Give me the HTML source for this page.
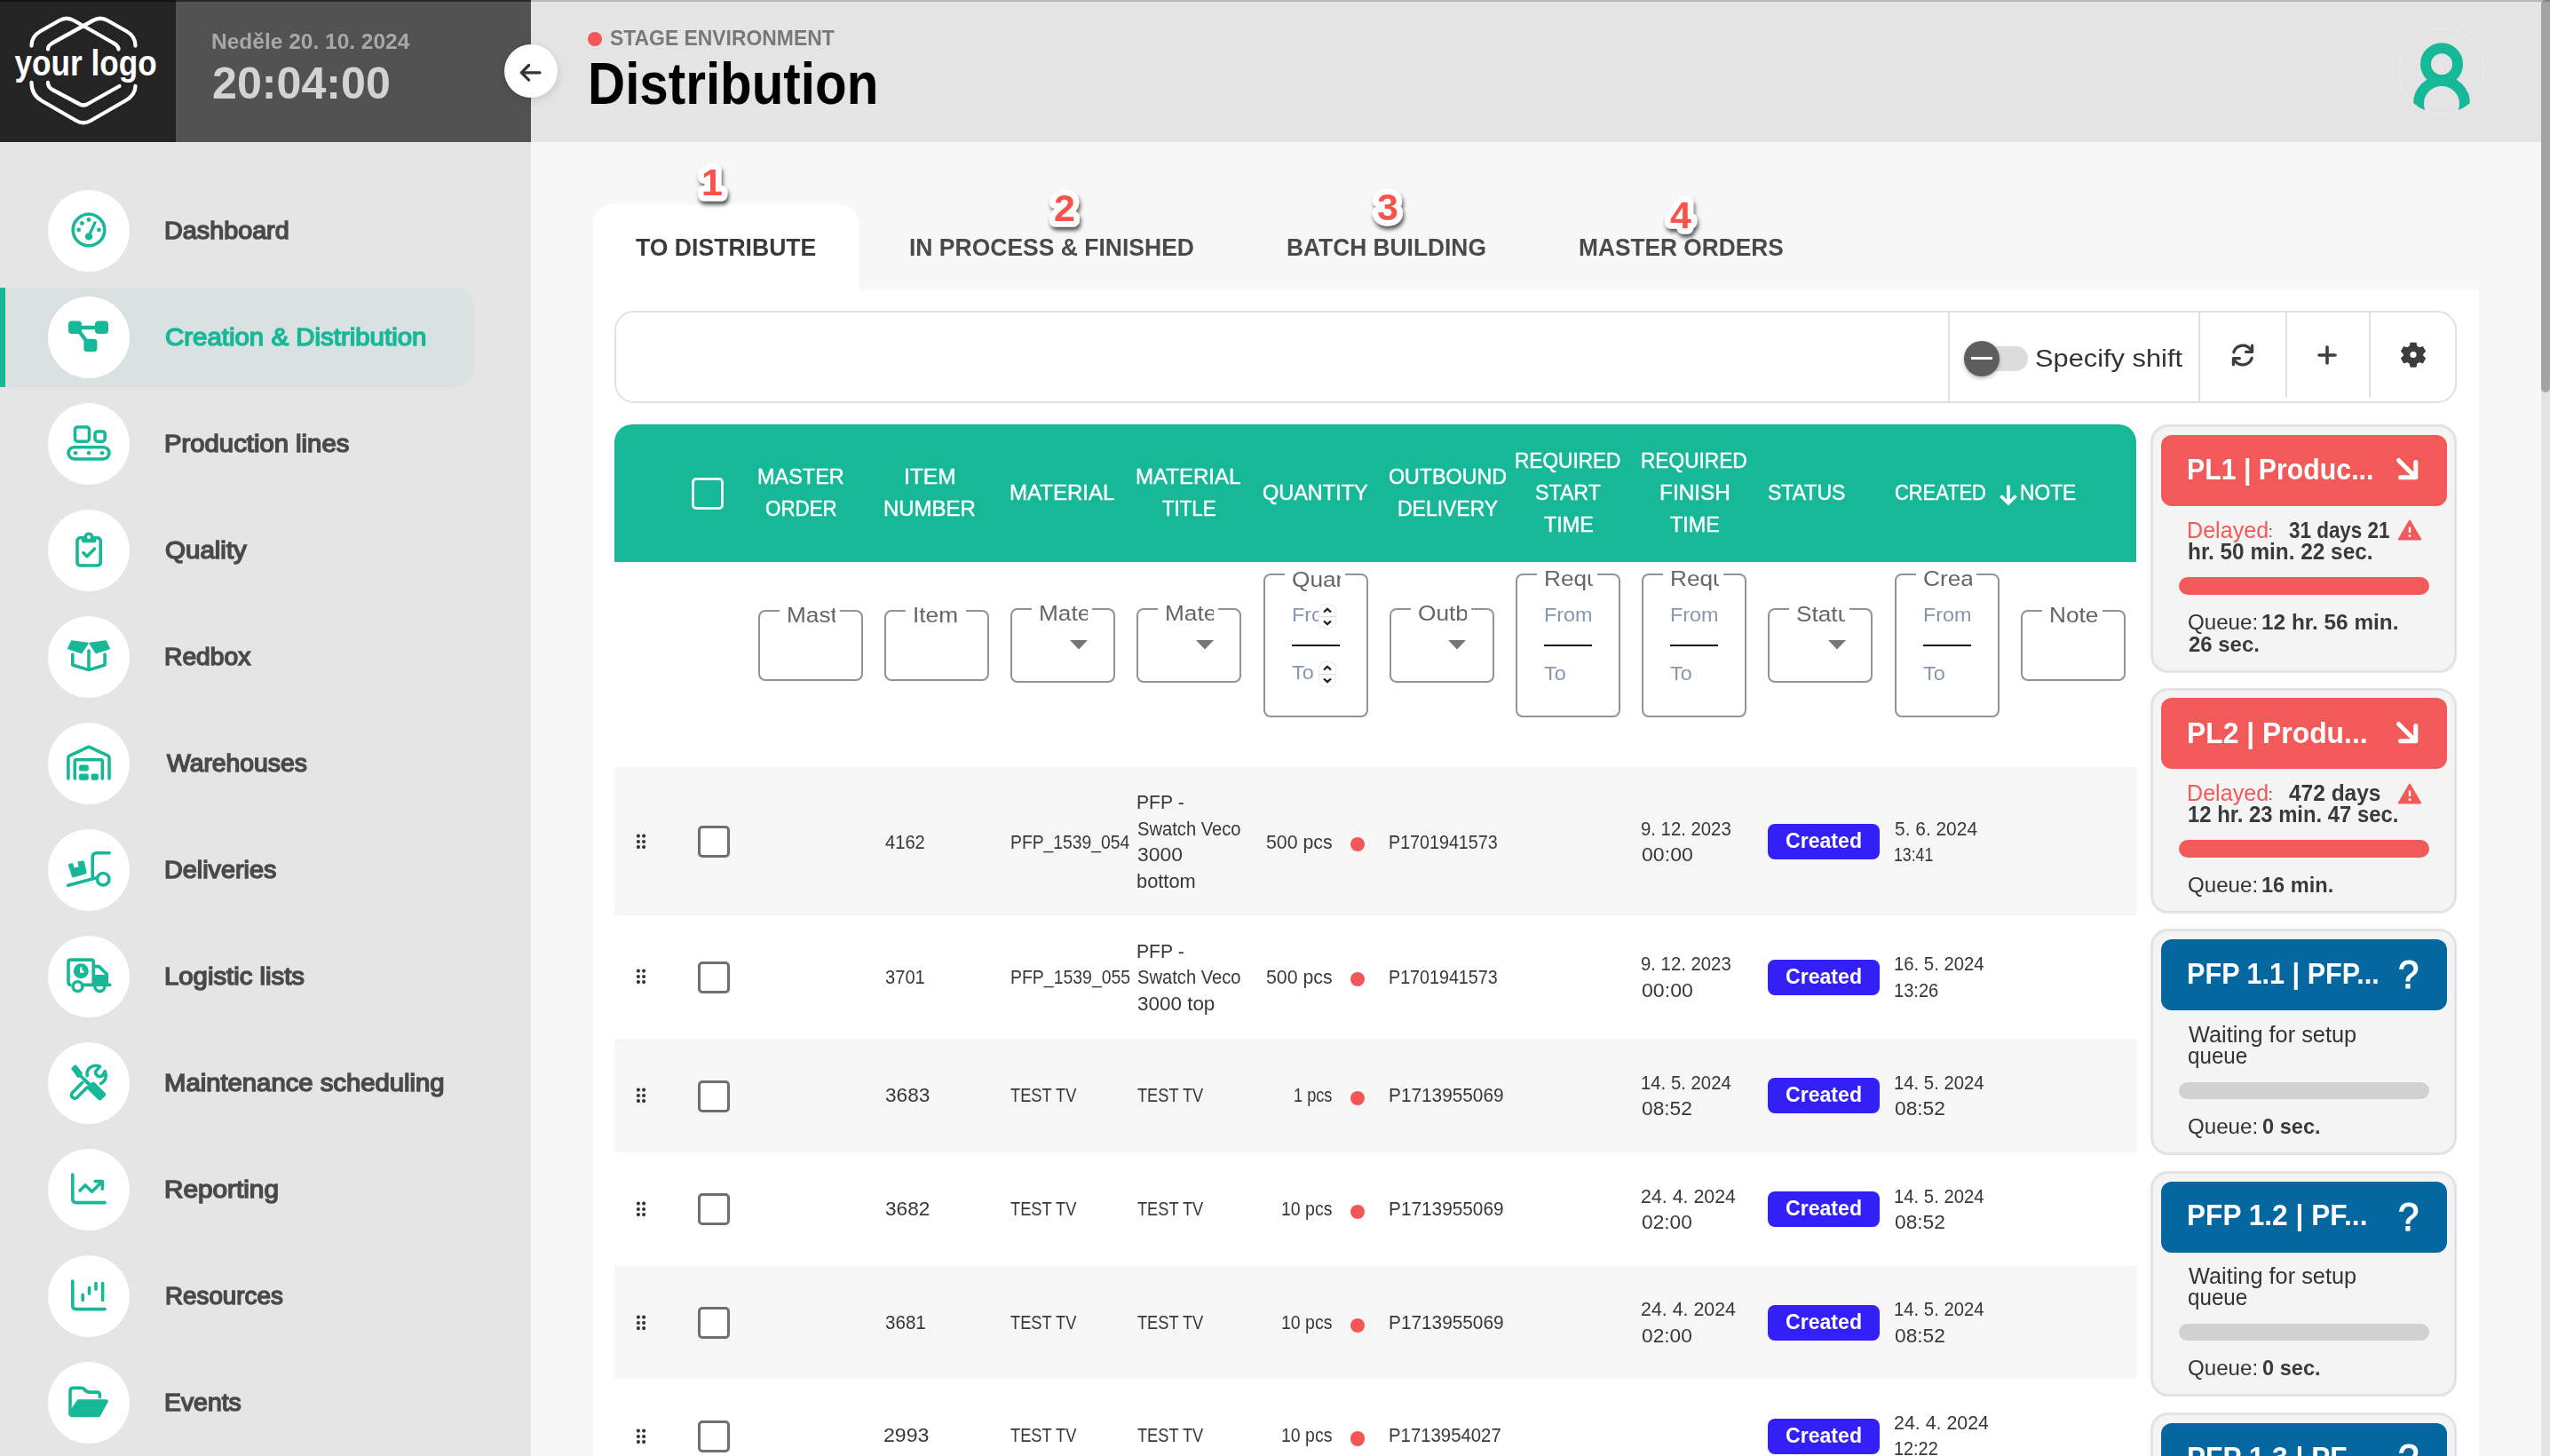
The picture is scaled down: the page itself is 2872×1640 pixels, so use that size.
<!DOCTYPE html>
<html><head><meta charset="utf-8">
<style>
*{box-sizing:border-box;margin:0;padding:0}
html,body{width:2872px;height:1640px;overflow:hidden;background:#f7f7f7;font-family:"Liberation Sans",sans-serif;position:relative}
.a{position:absolute}
.t{position:absolute;white-space:nowrap;line-height:1;transform-origin:0 0}
</style></head><body>
<div class="a" style="left:598px;top:0;width:2264px;height:160px;background:#e4e4e4"></div>
<div class="a" style="left:0;top:160px;width:598px;height:1480px;background:#e5e5e5"></div>
<div class="a" style="left:0;top:0;width:198px;height:160px;background:#242424"></div>
<div class="a" style="left:198px;top:0;width:400px;height:160px;background:#525252"></div>
<svg class="a" style="left:0;top:0" width="198" height="160" viewBox="0 0 198 160">
<g fill="none" stroke="#fff" stroke-width="4.3" stroke-linecap="round" stroke-linejoin="round">
<path d="M35.5 51.5 Q35.5 41 45 35.5 L67 23 Q75 18.5 83 23 L127 48 Q133.5 51.5 133.5 55.5"/>
<path d="M54 55.5 Q54 51.5 59 48.5 L105 23 Q113 18.5 121 23 L143 35.5 Q152.5 41 152.5 51.5"/>
<path d="M35.5 93 Q35.5 107 47 113.5 L86 136 Q94 140.5 102 136 L141 113.5 Q152.5 107 152.5 97"/>
<path d="M54 93 Q54 98 59 101 L90 117.5 Q94 119.5 98 117.5 L134.5 97"/>
</g>
<text x="16.50" y="84.6" transform="translate(1.987 0) scale(0.8796 1)" font-family="Liberation Sans" font-weight="bold" font-size="40" fill="#fff">your logo</text>
</svg>
<div class="a" style="left:568px;top:50px;width:60px;height:60px;border-radius:50%;background:#fff;box-shadow:0 3px 10px rgba(0,0,0,.13)"></div>
<svg class="a" style="left:568px;top:50px" width="60" height="60" viewBox="0 0 60 60"><path d="M19.3 31.8 H40 M19.3 31.8 L27.6 23.5 M19.3 31.8 L27.6 40.1" stroke="#333" stroke-width="3.2" fill="none" stroke-linecap="round" stroke-linejoin="round"/></svg>
<div class="a" style="left:0;top:324px;width:534px;height:112px;background:#dae2e1;border-radius:0 22px 22px 0"></div>
<div class="a" style="left:0;top:324px;width:6px;height:112px;background:#17b898"></div>
<div class="a" style="left:54px;top:214px;width:92px;height:92px;border-radius:50%;background:#fff"></div>
<svg class="a" style="left:54px;top:214px" width="92" height="92" viewBox="0 0 92 92"><circle cx="46" cy="45" r="17.8" fill="none" stroke="#17b898" stroke-width="3.6" stroke-linecap="round" stroke-linejoin="round" stroke-width="3.8"/><g fill="#17b898"><circle cx="34.7" cy="44.9" r="2.4"/><circle cx="38.4" cy="37.5" r="2.4"/><circle cx="46" cy="33.5" r="2.4"/><circle cx="57.4" cy="44.9" r="2.4"/><circle cx="46" cy="52.4" r="4.2"/></g><path d="M46 52 L53 36.6" stroke="#17b898" stroke-width="3.2" stroke-linecap="round"/></svg>
<div class="a" style="left:54px;top:334px;width:92px;height:92px;border-radius:50%;background:#fff"></div>
<svg class="a" style="left:54px;top:334px" width="92" height="92" viewBox="0 0 92 92"><g fill="#17b898"><rect x="23" y="27.5" width="15" height="14.5" rx="3.8"/><rect x="53" y="27.5" width="15" height="14.5" rx="3.8"/><rect x="40.4" y="47.7" width="15" height="14.5" rx="3.8"/></g><path d="M36 35 H55 M35 39 L44 51" stroke="#17b898" stroke-width="4.5"/></svg>
<div class="a" style="left:54px;top:454px;width:92px;height:92px;border-radius:50%;background:#fff"></div>
<svg class="a" style="left:54px;top:454px" width="92" height="92" viewBox="0 0 92 92"><rect x="30.5" y="27" width="16" height="16.2" rx="3" fill="none" stroke="#17b898" stroke-width="3.6" stroke-linecap="round" stroke-linejoin="round" stroke-width="3.5"/><rect x="53" y="32" width="11.2" height="11.2" rx="3" fill="none" stroke="#17b898" stroke-width="3.6" stroke-linecap="round" stroke-linejoin="round" stroke-width="3.5"/><rect x="23" y="49.7" width="46" height="13.3" rx="6.65" fill="none" stroke="#17b898" stroke-width="3.6" stroke-linecap="round" stroke-linejoin="round" stroke-width="3.5"/><g fill="#17b898"><circle cx="31" cy="56.2" r="2.3"/><circle cx="46" cy="56.2" r="2.3"/><circle cx="61" cy="56.2" r="2.3"/></g></svg>
<div class="a" style="left:54px;top:574px;width:92px;height:92px;border-radius:50%;background:#fff"></div>
<svg class="a" style="left:54px;top:574px" width="92" height="92" viewBox="0 0 92 92"><path d="M38 31.8 H37 Q33 31.8 33 35.8 V59 Q33 63 37 63 H55.2 Q59.2 63 59.2 59 V35.8 Q59.2 31.8 55.2 31.8 H54" fill="none" stroke="#17b898" stroke-width="3.6" stroke-linecap="round" stroke-linejoin="round" stroke-width="3.5"/><path fill="#17b898" fill-rule="evenodd" d="M40 30 H40.5 A5.6 5.6 0 0 1 51.5 30 H54.3 V35.3 Q54.3 37.3 52.3 37.3 H39.9 Q37.9 37.3 37.9 35.3 V30 Z M46 29 A2 2 0 1 0 46 33 A2 2 0 1 0 46 29 Z"/><path d="M39.8 48.6 L43.9 52.7 L52.4 44.2" fill="none" stroke="#17b898" stroke-width="3.6" stroke-linecap="round" stroke-linejoin="round" stroke-width="4"/></svg>
<div class="a" style="left:54px;top:694px;width:92px;height:92px;border-radius:50%;background:#fff"></div>
<svg class="a" style="left:54px;top:694px" width="92" height="92" viewBox="0 0 92 92"><g fill="#17b898" stroke="#17b898" stroke-width="1.5" stroke-linejoin="round"><path d="M26.8 28 L45 30.6 L37.8 41.6 L22.6 36.6 Z"/><path d="M65.2 28 L47 30.6 L54.2 41.6 L69.4 36.6 Z"/></g><path d="M27.8 43 V55 L46 60.6 L64.1 55 V43 M46 39 V60" fill="none" stroke="#17b898" stroke-width="3.6" stroke-linecap="round" stroke-linejoin="round" stroke-width="3.5"/></svg>
<div class="a" style="left:54px;top:814px;width:92px;height:92px;border-radius:50%;background:#fff"></div>
<svg class="a" style="left:54px;top:814px" width="92" height="92" viewBox="0 0 92 92"><path d="M22.9 63 V39.5 Q22.9 37.9 24.5 37.2 L46 27.2 L67.5 37.2 Q69 37.9 69 39.5 V63" fill="none" stroke="#17b898" stroke-width="3.6" stroke-linecap="round" stroke-linejoin="round" stroke-width="3.6"/><path d="M30.3 63 V43.5 Q30.3 41.7 32 41.7 H59.6 Q61.3 41.7 61.3 43.5 V63" fill="none" stroke="#17b898" stroke-width="3.6" stroke-linecap="round" stroke-linejoin="round" stroke-width="3.5"/><g fill="#17b898"><rect x="35" y="47.4" width="10.8" height="7.2" rx="2"/><rect x="35" y="57.5" width="10.8" height="7.2" rx="2"/><rect x="48.6" y="57.5" width="8.3" height="7.2" rx="2"/></g></svg>
<div class="a" style="left:54px;top:934px;width:92px;height:92px;border-radius:50%;background:#fff"></div>
<svg class="a" style="left:54px;top:934px" width="92" height="92" viewBox="0 0 92 92"><path d="M50.2 54 V31.6 Q50.2 26.8 55 26.8 H69.2 M22.7 63.2 L53.7 55" fill="none" stroke="#17b898" stroke-width="3.6" stroke-linecap="round" stroke-linejoin="round"/><circle cx="62.2" cy="56.2" r="6.75" fill="none" stroke="#17b898" stroke-width="3.6" stroke-linecap="round" stroke-linejoin="round" stroke-width="3.5"/><path fill="#17b898" d="M23 39.2 L28 38 L29.6 43.4 L34.6 42.2 L33.4 36.6 L38.5 35.4 Q40.5 35 41 37 L43.5 48 Q44 50 42 50.6 L29.2 54.2 Q27.3 54.6 26.8 52.7 L23.2 41.6 Q22.6 39.6 23 39.2 Z"/></svg>
<div class="a" style="left:54px;top:1054px;width:92px;height:92px;border-radius:50%;background:#fff"></div>
<svg class="a" style="left:54px;top:1054px" width="92" height="92" viewBox="0 0 92 92"><path d="M25 55.4 Q23 55 23 52 V29.3 Q23 27.1 25.5 27.1 H48.8 Q51.2 27.1 51.2 29.6 V55.4 H40 M52 34.6 H57.5 L66.3 43.3 V55.4 H69.8" fill="none" stroke="#17b898" stroke-width="3.6" stroke-linecap="round" stroke-linejoin="round" stroke-width="3.6"/><path fill="#17b898" d="M51 44 H66.5 V57 H51 Z"/><circle cx="33.5" cy="57.2" r="5.4" fill="none" stroke="#17b898" stroke-width="3.6" stroke-linecap="round" stroke-linejoin="round" stroke-width="3.4"/><circle cx="58.4" cy="57.2" r="5.4" fill="none" stroke="#17b898" stroke-width="3.6" stroke-linecap="round" stroke-linejoin="round" stroke-width="3.4"/><circle cx="37.3" cy="39.8" r="8.5" fill="#17b898"/><path d="M37.3 35.5 V40.5 H40.5" stroke="#fff" stroke-width="2.4" fill="none"/></svg>
<div class="a" style="left:54px;top:1174px;width:92px;height:92px;border-radius:50%;background:#fff"></div>
<svg class="a" style="left:54px;top:1174px" width="92" height="92" viewBox="0 0 92 92"><g fill="#17b898"><path d="M26.6 28.8 Q26 29.6 26.6 30.4 L33 39.2 Q33.6 39.9 34.6 39.7 L36 39.4 L42.8 46.2 L45.2 43.8 L38.4 37 L38.7 35.4 Q39 34.4 38.2 33.6 L31.8 25.6 Q31 25 30.2 25.6 Z"/><rect x="44" y="49.6" width="21.5" height="11" rx="3.2" transform="rotate(45 54.75 55.1)"/><path d="M40 41 L48.6 49.6" stroke="#17b898" stroke-width="4.2"/></g><path d="M38.6 45.6 L27.5 56.7 A3.8 3.8 0 0 0 32.9 62.1 L44 51" fill="none" stroke="#17b898" stroke-width="3.6" stroke-linecap="round" stroke-linejoin="round" stroke-width="3.5"/><path d="M44.2 37.6 Q43.2 32 47.2 28.6 Q52.4 24.6 58.6 27.4 L53.8 32.6 Q53.2 36 55.6 37.8 Q58.6 39.6 61.8 37.2 L64.2 32.6 Q66.2 37.8 64.2 42.2 Q62.6 45 59.6 46.4" fill="none" stroke="#17b898" stroke-width="3.6" stroke-linecap="round" stroke-linejoin="round" stroke-width="3.6"/></svg>
<div class="a" style="left:54px;top:1294px;width:92px;height:92px;border-radius:50%;background:#fff"></div>
<svg class="a" style="left:54px;top:1294px" width="92" height="92" viewBox="0 0 92 92"><path d="M27.8 29 V57 Q27.8 60.6 31.6 60.6 H64.1 M36 47 L42 41 L49.6 48.3 L61.3 36.6 M53.2 36.6 H61.3 V45.3" fill="none" stroke="#17b898" stroke-width="3.6" stroke-linecap="round" stroke-linejoin="round" stroke-width="3.6"/></svg>
<div class="a" style="left:54px;top:1414px;width:92px;height:92px;border-radius:50%;background:#fff"></div>
<svg class="a" style="left:54px;top:1414px" width="92" height="92" viewBox="0 0 92 92"><path d="M27.8 29 V57 Q27.8 60.6 31.6 60.6 H64.1 M39.2 44.2 V50.5 M46.6 36.6 V43.3 M54 31.6 V38.2 M61.6 31.6 V50.5" fill="none" stroke="#17b898" stroke-width="3.6" stroke-linecap="round" stroke-linejoin="round" stroke-width="3.6"/></svg>
<div class="a" style="left:54px;top:1534px;width:92px;height:92px;border-radius:50%;background:#fff"></div>
<svg class="a" style="left:54px;top:1534px" width="92" height="92" viewBox="0 0 92 92"><path d="M25 56 V33 Q25 29.4 28.6 29.4 H37.6 Q39.5 29.4 41 31 Q43.5 34.1 46.6 34.1 H55.4 Q58.4 34.1 58.4 37.3 V39.6" fill="none" stroke="#17b898" stroke-width="3.6" stroke-linecap="round" stroke-linejoin="round" stroke-width="3.6"/><path fill="#17b898" d="M23 57.5 L32.6 43.4 Q33.4 42.3 34.8 42.3 H65.3 Q68.8 42.3 67.6 45.2 L58.6 61.5 Q58.2 62.2 57.2 62.2 H28.2 Q23 62.2 23 57.5 Z"/></svg>
<div class="a" style="left:662px;top:36px;width:16px;height:16px;border-radius:50%;background:#f25656"></div>
<svg class="a" style="left:2700px;top:30px" width="100" height="100" viewBox="0 0 100 100">
<defs><clipPath id="av"><circle cx="50" cy="50" r="48"/></clipPath></defs>
<circle cx="50" cy="50" r="48" fill="none" stroke="#eeeeee" stroke-width="1"/>
<g clip-path="url(#av)" fill="none" stroke="#17b898" stroke-width="12"><circle cx="50" cy="42.3" r="18"/><circle cx="50" cy="87" r="26"/></g>
</svg>
<div class="a" style="left:668px;top:326px;width:2124px;height:1314px;background:#fff"></div>
<div class="a" style="left:668px;top:230px;width:300px;height:110px;background:#fff;border-radius:22px 22px 0 0"></div>
<svg class="a" style="left:762px;top:164px;overflow:visible" width="80" height="80" viewBox="0 0 80 80"><defs><filter id="sh1" x="-50%" y="-50%" width="200%" height="200%"><feDropShadow dx="1.5" dy="4" stdDeviation="2.2" flood-color="#000" flood-opacity="0.65"/></filter></defs><text x="40" y="55.5" text-anchor="middle" font-family="Liberation Sans" font-weight="bold" font-size="43" fill="#fb5249" stroke="#fff" stroke-width="13" stroke-linejoin="round" paint-order="stroke" filter="url(#sh1)">1</text></svg>
<svg class="a" style="left:1159px;top:193px;overflow:visible" width="80" height="80" viewBox="0 0 80 80"><defs><filter id="sh2" x="-50%" y="-50%" width="200%" height="200%"><feDropShadow dx="1.5" dy="4" stdDeviation="2.2" flood-color="#000" flood-opacity="0.65"/></filter></defs><text x="40" y="55.5" text-anchor="middle" font-family="Liberation Sans" font-weight="bold" font-size="43" fill="#fb5249" stroke="#fff" stroke-width="13" stroke-linejoin="round" paint-order="stroke" filter="url(#sh2)">2</text></svg>
<svg class="a" style="left:1523px;top:192px;overflow:visible" width="80" height="80" viewBox="0 0 80 80"><defs><filter id="sh3" x="-50%" y="-50%" width="200%" height="200%"><feDropShadow dx="1.5" dy="4" stdDeviation="2.2" flood-color="#000" flood-opacity="0.65"/></filter></defs><text x="40" y="55.5" text-anchor="middle" font-family="Liberation Sans" font-weight="bold" font-size="43" fill="#fb5249" stroke="#fff" stroke-width="13" stroke-linejoin="round" paint-order="stroke" filter="url(#sh3)">3</text></svg>
<svg class="a" style="left:1853px;top:201px;overflow:visible" width="80" height="80" viewBox="0 0 80 80"><defs><filter id="sh4" x="-50%" y="-50%" width="200%" height="200%"><feDropShadow dx="1.5" dy="4" stdDeviation="2.2" flood-color="#000" flood-opacity="0.65"/></filter></defs><text x="40" y="55.5" text-anchor="middle" font-family="Liberation Sans" font-weight="bold" font-size="43" fill="#fb5249" stroke="#fff" stroke-width="13" stroke-linejoin="round" paint-order="stroke" filter="url(#sh4)">4</text></svg>
<div class="a" style="left:692px;top:350px;width:2075px;height:104px;border:2px solid #e1e1e1;border-radius:22px;background:#fff"></div>
<div class="a" style="left:2194px;top:351px;width:2px;height:102px;background:#e1e1e1"></div>
<div class="a" style="left:2476px;top:351px;width:2px;height:102px;background:#e1e1e1"></div>
<div class="a" style="left:2574px;top:351px;width:2px;height:97px;background:#e1e1e1"></div>
<div class="a" style="left:2668px;top:351px;width:2px;height:97px;background:#e1e1e1"></div>
<div class="a" style="left:2222px;top:390px;width:62px;height:28px;border-radius:14px;background:#dcdcdc"></div>
<div class="a" style="left:2212px;top:384px;width:40px;height:40px;border-radius:50%;background:#5e5e5e;box-shadow:0 2px 4px rgba(0,0,0,.3)"></div>
<div class="a" style="left:2220px;top:402px;width:24px;height:3px;background:#fff"></div>
<svg class="a" style="left:2506px;top:380px" width="40" height="40" viewBox="0 0 40 40"><g fill="none" stroke="#3d3d3d" stroke-width="3.2" stroke-linecap="round" stroke-linejoin="round">
<path d="M9.8 16.8 A10.8 10.8 0 0 1 28.6 13.2"/><path d="M30.2 23.2 A10.8 10.8 0 0 1 11.4 26.8"/>
<path d="M30.6 9.2 V16.4 H23.6"/><path d="M9.4 30.8 V23.6 H16.4"/></g></svg>
<svg class="a" style="left:2601px;top:380px" width="40" height="40" viewBox="0 0 40 40"><path d="M20 11 V29 M11 20 H29" stroke="#3d3d3d" stroke-width="3.6" stroke-linecap="round"/></svg>
<svg class="a" style="left:2698px;top:380px" width="40" height="40" viewBox="0 0 40 40"><g transform="translate(20 19.5)">
<path fill="#3d3d3d" fill-rule="evenodd" d="M-2.8 -13 H2.8 L3.6 -9.2 L6.8 -7.4 L10.4 -8.6 L13.2 -3.8 L10.4 -1.2 V1.6 L13.2 4.2 L10.4 9 L6.8 7.8 L3.6 9.6 L2.8 13.4 H-2.8 L-3.6 9.6 L-6.8 7.8 L-10.4 9 L-13.2 4.2 L-10.4 1.6 V-1.2 L-13.2 -3.8 L-10.4 -8.6 L-6.8 -7.4 L-3.6 -9.2 Z M0 -4.4 A4.4 4.4 0 1 0 0 4.4 A4.4 4.4 0 1 0 0 -4.4 Z" stroke="#3d3d3d" stroke-width="1.6" stroke-linejoin="round"/></g></svg>
<div class="a" style="left:692px;top:478px;width:1714px;height:155px;background:#17b898;border-radius:20px 20px 0 0"></div>
<div class="a" style="left:779px;top:538px;width:36px;height:36px;border:3.5px solid #eef5f3;border-radius:5px"></div>
<svg class="a" style="left:2250px;top:544px" width="24" height="26" viewBox="0 0 24 26"><path d="M12 2.5 V23 M3.5 14.5 L12 23 L20.5 14.5" stroke="#fff" stroke-width="3.6" fill="none"/></svg>
<div class="a" style="left:854px;top:687px;width:118px;height:80px;border:2px solid #939393;border-radius:8px"></div>
<div class="a" style="left:878px;top:684px;width:68px;height:8px;background:#fff"></div>
<div class="a" style="left:996px;top:687px;width:118px;height:80px;border:2px solid #939393;border-radius:8px"></div>
<div class="a" style="left:1020px;top:684px;width:68px;height:8px;background:#fff"></div>
<div class="a" style="left:2276px;top:687px;width:118px;height:80px;border:2px solid #939393;border-radius:8px"></div>
<div class="a" style="left:2300px;top:684px;width:68px;height:8px;background:#fff"></div>
<div class="a" style="left:1138px;top:685px;width:118px;height:84px;border:2px solid #939393;border-radius:8px"></div>
<div class="a" style="left:1162px;top:682px;width:68px;height:8px;background:#fff"></div>
<div class="a" style="left:1280.2px;top:685px;width:118px;height:84px;border:2px solid #939393;border-radius:8px"></div>
<div class="a" style="left:1304.2px;top:682px;width:68px;height:8px;background:#fff"></div>
<div class="a" style="left:1565px;top:685px;width:118px;height:84px;border:2px solid #939393;border-radius:8px"></div>
<div class="a" style="left:1589px;top:682px;width:68px;height:8px;background:#fff"></div>
<div class="a" style="left:1991px;top:685px;width:118px;height:84px;border:2px solid #939393;border-radius:8px"></div>
<div class="a" style="left:2015px;top:682px;width:68px;height:8px;background:#fff"></div>
<div class="a" style="left:1423px;top:646px;width:118px;height:162px;border:2px solid #939393;border-radius:8px"></div>
<div class="a" style="left:1447px;top:643px;width:68px;height:8px;background:#fff"></div>
<div class="a" style="left:1707px;top:646px;width:118px;height:162px;border:2px solid #939393;border-radius:8px"></div>
<div class="a" style="left:1731px;top:643px;width:68px;height:8px;background:#fff"></div>
<div class="a" style="left:1849px;top:646px;width:118px;height:162px;border:2px solid #939393;border-radius:8px"></div>
<div class="a" style="left:1873px;top:643px;width:68px;height:8px;background:#fff"></div>
<div class="a" style="left:2134px;top:646px;width:118px;height:162px;border:2px solid #939393;border-radius:8px"></div>
<div class="a" style="left:2158px;top:643px;width:68px;height:8px;background:#fff"></div>
<div class="a" style="left:887px;top:677.81px;width:54px;height:30px;overflow:hidden"><div class="t" style="left:-1.13px;top:4px;font-size:23.26px;color:#666;transform:scaleX(1.1276)">Master order</div></div>
<div class="a" style="left:1029px;top:677.81px;width:54px;height:30px;overflow:hidden"><div class="t" style="left:-1.13px;top:4px;font-size:23.26px;color:#666;transform:scaleX(1.1276)">Item number</div></div>
<div class="a" style="left:1171px;top:676.01px;width:54px;height:30px;overflow:hidden"><div class="t" style="left:-1.13px;top:4px;font-size:23.26px;color:#666;transform:scaleX(1.1276)">Material</div></div>
<div class="a" style="left:1313.2px;top:676.01px;width:54px;height:30px;overflow:hidden"><div class="t" style="left:-1.13px;top:4px;font-size:23.26px;color:#666;transform:scaleX(1.1276)">Material title</div></div>
<div class="a" style="left:1456px;top:637.51px;width:54px;height:30px;overflow:hidden"><div class="t" style="left:-1.13px;top:4px;font-size:23.26px;color:#666;transform:scaleX(1.1276)">Quantity</div></div>
<div class="a" style="left:1598px;top:675.81px;width:54px;height:30px;overflow:hidden"><div class="t" style="left:-1.13px;top:4px;font-size:23.26px;color:#666;transform:scaleX(1.1276)">Outbound delivery</div></div>
<div class="a" style="left:1740px;top:636.61px;width:54px;height:30px;overflow:hidden"><div class="t" style="left:-1.13px;top:4px;font-size:23.26px;color:#666;transform:scaleX(1.1276)">Required start time</div></div>
<div class="a" style="left:1882px;top:636.61px;width:54px;height:30px;overflow:hidden"><div class="t" style="left:-1.13px;top:4px;font-size:23.26px;color:#666;transform:scaleX(1.1276)">Required finish time</div></div>
<div class="a" style="left:2024px;top:676.61px;width:54px;height:30px;overflow:hidden"><div class="t" style="left:-1.13px;top:4px;font-size:23.26px;color:#666;transform:scaleX(1.1276)">Status</div></div>
<div class="a" style="left:2167px;top:636.61px;width:54px;height:30px;overflow:hidden"><div class="t" style="left:-1.13px;top:4px;font-size:23.26px;color:#666;transform:scaleX(1.1276)">Created</div></div>
<div class="a" style="left:2309px;top:677.81px;width:60px;height:30px;overflow:hidden"><div class="t" style="left:-1.13px;top:4px;font-size:23.26px;color:#666;transform:scaleX(1.1276)">Note</div></div>
<div class="a" style="left:1456px;top:678.19px;width:29px;height:30px;overflow:hidden"><div class="t" style="left:-1.06px;top:4px;font-size:22.09px;color:#8797ad;transform:scaleX(1.0587)">From</div></div>
<div class="t" style="left:1454.94px;top:747.49px;font-size:22.09px;color:#8797ad;transform:scaleX(1.0587)">To</div>
<div class="a" style="left:1455px;top:726px;width:54px;height:2px;background:#111"></div>
<div class="a" style="left:1740px;top:678.49px;width:60px;height:30px;overflow:hidden"><div class="t" style="left:-1.06px;top:4px;font-size:22.09px;color:#8797ad;transform:scaleX(1.0587)">From</div></div>
<div class="t" style="left:1738.94px;top:748.49px;font-size:22.09px;color:#8797ad;transform:scaleX(1.0587)">To</div>
<div class="a" style="left:1739px;top:726px;width:54px;height:2px;background:#111"></div>
<div class="a" style="left:1882px;top:678.49px;width:60px;height:30px;overflow:hidden"><div class="t" style="left:-1.06px;top:4px;font-size:22.09px;color:#8797ad;transform:scaleX(1.0587)">From</div></div>
<div class="t" style="left:1880.94px;top:748.49px;font-size:22.09px;color:#8797ad;transform:scaleX(1.0587)">To</div>
<div class="a" style="left:1881px;top:726px;width:54px;height:2px;background:#111"></div>
<div class="a" style="left:2167px;top:678.49px;width:60px;height:30px;overflow:hidden"><div class="t" style="left:-1.06px;top:4px;font-size:22.09px;color:#8797ad;transform:scaleX(1.0587)">From</div></div>
<div class="t" style="left:2165.94px;top:748.49px;font-size:22.09px;color:#8797ad;transform:scaleX(1.0587)">To</div>
<div class="a" style="left:2166px;top:726px;width:54px;height:2px;background:#111"></div>
<div class="a" style="left:1486px;top:680.7px;width:18px;height:26.6px;border-radius:7px;background:#fff;box-shadow:0 0 2px rgba(0,0,0,.25)"></div>
<svg class="a" style="left:1486px;top:680.7px" width="18" height="27" viewBox="0 0 18 27"><path d="M5 8.5 L9 4.8 L13 8.5 M5 18.5 L9 22.2 L13 18.5" stroke="#222" stroke-width="2.3" fill="none"/><path d="M0 13.5 H18" stroke="#ddd" stroke-width="1"/></svg>
<div class="a" style="left:1486px;top:746.3000000000001px;width:18px;height:26.6px;border-radius:7px;background:#fff;box-shadow:0 0 2px rgba(0,0,0,.25)"></div>
<svg class="a" style="left:1486px;top:746.3000000000001px" width="18" height="27" viewBox="0 0 18 27"><path d="M5 8.5 L9 4.8 L13 8.5 M5 18.5 L9 22.2 L13 18.5" stroke="#222" stroke-width="2.3" fill="none"/><path d="M0 13.5 H18" stroke="#ddd" stroke-width="1"/></svg>
<svg class="a" style="left:1205.2px;top:720.5px" width="20" height="11" viewBox="0 0 20 11"><path d="M0 0 H20 L10 10.5 Z" fill="#777"/></svg>
<svg class="a" style="left:1347px;top:720.5px" width="20" height="11" viewBox="0 0 20 11"><path d="M0 0 H20 L10 10.5 Z" fill="#777"/></svg>
<svg class="a" style="left:1631.3px;top:720.5px" width="20" height="11" viewBox="0 0 20 11"><path d="M0 0 H20 L10 10.5 Z" fill="#777"/></svg>
<svg class="a" style="left:2058.5px;top:720.5px" width="20" height="11" viewBox="0 0 20 11"><path d="M0 0 H20 L10 10.5 Z" fill="#777"/></svg>
<div class="a" style="left:692px;top:864px;width:1714px;height:167px;background:#f6f6f6"></div>
<div class="a" style="left:692px;top:1170px;width:1714px;height:128px;background:#f6f6f6"></div>
<div class="a" style="left:692px;top:1426px;width:1714px;height:127px;background:#f6f6f6"></div>
<svg class="a" style="left:710px;top:933.8px" width="24" height="28" viewBox="0 0 24 28"><g fill="#333"><circle cx="8.9" cy="7.6" r="2.05"/><circle cx="15.1" cy="7.6" r="2.05"/><circle cx="8.9" cy="14" r="2.05"/><circle cx="15.1" cy="14" r="2.05"/><circle cx="8.9" cy="20.1" r="2.05"/><circle cx="15.1" cy="20.1" r="2.05"/></g></svg>
<div class="a" style="left:786px;top:930.2px;width:36px;height:36px;border:3.8px solid #6f6f6f;border-radius:5px;background:#fff"></div>
<div class="a" style="left:1521px;top:942.5px;width:16.4px;height:16.4px;border-radius:50%;background:#f25656"></div>
<svg class="a" style="left:710px;top:1086.3px" width="24" height="28" viewBox="0 0 24 28"><g fill="#333"><circle cx="8.9" cy="7.6" r="2.05"/><circle cx="15.1" cy="7.6" r="2.05"/><circle cx="8.9" cy="14" r="2.05"/><circle cx="15.1" cy="14" r="2.05"/><circle cx="8.9" cy="20.1" r="2.05"/><circle cx="15.1" cy="20.1" r="2.05"/></g></svg>
<div class="a" style="left:786px;top:1082.7px;width:36px;height:36px;border:3.8px solid #6f6f6f;border-radius:5px;background:#fff"></div>
<div class="a" style="left:1521px;top:1095.0px;width:16.4px;height:16.4px;border-radius:50%;background:#f25656"></div>
<svg class="a" style="left:710px;top:1220.2px" width="24" height="28" viewBox="0 0 24 28"><g fill="#333"><circle cx="8.9" cy="7.6" r="2.05"/><circle cx="15.1" cy="7.6" r="2.05"/><circle cx="8.9" cy="14" r="2.05"/><circle cx="15.1" cy="14" r="2.05"/><circle cx="8.9" cy="20.1" r="2.05"/><circle cx="15.1" cy="20.1" r="2.05"/></g></svg>
<div class="a" style="left:786px;top:1216.6px;width:36px;height:36px;border:3.8px solid #6f6f6f;border-radius:5px;background:#fff"></div>
<div class="a" style="left:1521px;top:1228.9px;width:16.4px;height:16.4px;border-radius:50%;background:#f25656"></div>
<svg class="a" style="left:710px;top:1348px" width="24" height="28" viewBox="0 0 24 28"><g fill="#333"><circle cx="8.9" cy="7.6" r="2.05"/><circle cx="15.1" cy="7.6" r="2.05"/><circle cx="8.9" cy="14" r="2.05"/><circle cx="15.1" cy="14" r="2.05"/><circle cx="8.9" cy="20.1" r="2.05"/><circle cx="15.1" cy="20.1" r="2.05"/></g></svg>
<div class="a" style="left:786px;top:1344.4px;width:36px;height:36px;border:3.8px solid #6f6f6f;border-radius:5px;background:#fff"></div>
<div class="a" style="left:1521px;top:1356.7px;width:16.4px;height:16.4px;border-radius:50%;background:#f25656"></div>
<svg class="a" style="left:710px;top:1475.8px" width="24" height="28" viewBox="0 0 24 28"><g fill="#333"><circle cx="8.9" cy="7.6" r="2.05"/><circle cx="15.1" cy="7.6" r="2.05"/><circle cx="8.9" cy="14" r="2.05"/><circle cx="15.1" cy="14" r="2.05"/><circle cx="8.9" cy="20.1" r="2.05"/><circle cx="15.1" cy="20.1" r="2.05"/></g></svg>
<div class="a" style="left:786px;top:1472.2px;width:36px;height:36px;border:3.8px solid #6f6f6f;border-radius:5px;background:#fff"></div>
<div class="a" style="left:1521px;top:1484.5px;width:16.4px;height:16.4px;border-radius:50%;background:#f25656"></div>
<svg class="a" style="left:710px;top:1603.5px" width="24" height="28" viewBox="0 0 24 28"><g fill="#333"><circle cx="8.9" cy="7.6" r="2.05"/><circle cx="15.1" cy="7.6" r="2.05"/><circle cx="8.9" cy="14" r="2.05"/><circle cx="15.1" cy="14" r="2.05"/><circle cx="8.9" cy="20.1" r="2.05"/><circle cx="15.1" cy="20.1" r="2.05"/></g></svg>
<div class="a" style="left:786px;top:1599.9px;width:36px;height:36px;border:3.8px solid #6f6f6f;border-radius:5px;background:#fff"></div>
<div class="a" style="left:1521px;top:1612.2px;width:16.4px;height:16.4px;border-radius:50%;background:#f25656"></div>
<div class="a" style="left:1991px;top:928px;width:126px;height:40px;border-radius:8px;background:#3220f6"></div>
<div class="a" style="left:1991px;top:1081px;width:126px;height:40px;border-radius:8px;background:#3220f6"></div>
<div class="a" style="left:1991px;top:1214px;width:126px;height:40px;border-radius:8px;background:#3220f6"></div>
<div class="a" style="left:1991px;top:1342px;width:126px;height:40px;border-radius:8px;background:#3220f6"></div>
<div class="a" style="left:1991px;top:1470px;width:126px;height:40px;border-radius:8px;background:#3220f6"></div>
<div class="a" style="left:1991px;top:1598px;width:126px;height:40px;border-radius:8px;background:#3220f6"></div>
<div class="a" style="left:2422px;top:478px;width:345px;height:279.70000000000005px;border:3px solid #e3e3e3;border-radius:20px;background:#f4f4f4"></div>
<div class="a" style="left:2434px;top:489.6px;width:321.8px;height:80px;border-radius:12px;background:#f25a5a"></div>
<svg class="a" style="left:2696px;top:513px" width="32" height="32" viewBox="0 0 32 32"><path d="M5.5 5.5 L24.5 24.5 M7.5 24.8 H24.8 V7.5" stroke="#fff" stroke-width="5" fill="none" stroke-linecap="round" stroke-linejoin="round"/></svg>
<div class="a" style="left:2422px;top:774.5px;width:345px;height:254.0px;border:3px solid #e3e3e3;border-radius:20px;background:#f4f4f4"></div>
<div class="a" style="left:2434px;top:786.1px;width:321.8px;height:80px;border-radius:12px;background:#f25a5a"></div>
<svg class="a" style="left:2696px;top:809.5px" width="32" height="32" viewBox="0 0 32 32"><path d="M5.5 5.5 L24.5 24.5 M7.5 24.8 H24.8 V7.5" stroke="#fff" stroke-width="5" fill="none" stroke-linecap="round" stroke-linejoin="round"/></svg>
<div class="a" style="left:2422px;top:1046px;width:345px;height:255px;border:3px solid #e3e3e3;border-radius:20px;background:#f4f4f4"></div>
<div class="a" style="left:2434px;top:1057.6px;width:321.8px;height:80px;border-radius:12px;background:#0567a0"></div>
<div class="t" style="left:2700.5px;top:1076px;font-size:44px;color:#fff;-webkit-text-stroke:1.2px #fff;transform:scaleX(0.95)">?</div>
<div class="a" style="left:2422px;top:1319px;width:345px;height:254px;border:3px solid #e3e3e3;border-radius:20px;background:#f4f4f4"></div>
<div class="a" style="left:2434px;top:1330.6px;width:321.8px;height:80px;border-radius:12px;background:#0567a0"></div>
<div class="t" style="left:2700.5px;top:1349px;font-size:44px;color:#fff;-webkit-text-stroke:1.2px #fff;transform:scaleX(0.95)">?</div>
<div class="a" style="left:2422px;top:1591px;width:345px;height:254px;border:3px solid #e3e3e3;border-radius:20px;background:#f4f4f4"></div>
<div class="a" style="left:2434px;top:1602.6px;width:321.8px;height:80px;border-radius:12px;background:#0567a0"></div>
<div class="t" style="left:2700.5px;top:1621px;font-size:44px;color:#fff;-webkit-text-stroke:1.2px #fff;transform:scaleX(0.95)">?</div>
<div class="a" style="left:2454px;top:650px;width:282px;height:20px;border-radius:10px;background:#f25a5a"></div>
<div class="a" style="left:2454px;top:946px;width:282px;height:19.5px;border-radius:10px;background:#f25a5a"></div>
<div class="a" style="left:2454px;top:1218.5px;width:282px;height:19.5px;border-radius:10px;background:#d1d1d1"></div>
<div class="a" style="left:2454px;top:1490.5px;width:282px;height:19.5px;border-radius:10px;background:#d1d1d1"></div>
<svg class="a" style="left:2700px;top:585px" width="28" height="24" viewBox="0 0 28 24"><path d="M14 1.5 L26.2 22.5 H1.8 Z" fill="#f25a5a" stroke="#f25a5a" stroke-width="2" stroke-linejoin="round"/><path d="M14 8.5 V15" stroke="#fff" stroke-width="2.4"/><circle cx="14" cy="18.6" r="1.5" fill="#fff"/></svg>
<svg class="a" style="left:2700px;top:882px" width="28" height="24" viewBox="0 0 28 24"><path d="M14 1.5 L26.2 22.5 H1.8 Z" fill="#f25a5a" stroke="#f25a5a" stroke-width="2" stroke-linejoin="round"/><path d="M14 8.5 V15" stroke="#fff" stroke-width="2.4"/><circle cx="14" cy="18.6" r="1.5" fill="#fff"/></svg>
<div class="t" style="left:238.01px;top:35.08px;font-size:24.71px;color:#a8a8a8;font-weight:bold;transform:scaleX(0.9917);">Neděle 20. 10. 2024</div>
<div class="t" style="left:239.39px;top:70.09px;font-size:49.86px;color:#d3d3d3;font-weight:bold;transform:scaleX(1.0061);">20:04:00</div>
<div class="t" style="left:185.45px;top:246.00px;font-size:28.05px;color:#4a4a4a;transform:scaleX(1.0254);-webkit-text-stroke:1.5px #4a4a4a;">Dashboard</div>
<div class="t" style="left:186.45px;top:366.00px;font-size:28.05px;color:#17b898;transform:scaleX(1.0493);-webkit-text-stroke:1.5px #17b898;">Creation &amp; Distribution</div>
<div class="t" style="left:185.41px;top:486.00px;font-size:28.05px;color:#4a4a4a;transform:scaleX(1.0439);-webkit-text-stroke:1.5px #4a4a4a;">Production lines</div>
<div class="t" style="left:186.45px;top:606.00px;font-size:28.05px;color:#4a4a4a;transform:scaleX(1.0525);-webkit-text-stroke:1.5px #4a4a4a;">Quality</div>
<div class="t" style="left:185.49px;top:726.00px;font-size:28.05px;color:#4a4a4a;transform:scaleX(1.0069);-webkit-text-stroke:1.5px #4a4a4a;">Redbox</div>
<div class="t" style="left:187.50px;top:846.00px;font-size:28.05px;color:#4a4a4a;transform:scaleX(1.0097);-webkit-text-stroke:1.5px #4a4a4a;">Warehouses</div>
<div class="t" style="left:185.45px;top:966.00px;font-size:28.05px;color:#4a4a4a;transform:scaleX(1.0255);-webkit-text-stroke:1.5px #4a4a4a;">Deliveries</div>
<div class="t" style="left:185.41px;top:1086.00px;font-size:28.05px;color:#4a4a4a;transform:scaleX(1.0451);-webkit-text-stroke:1.5px #4a4a4a;">Logistic lists</div>
<div class="t" style="left:185.41px;top:1206.00px;font-size:28.05px;color:#4a4a4a;transform:scaleX(1.0435);-webkit-text-stroke:1.5px #4a4a4a;">Maintenance scheduling</div>
<div class="t" style="left:185.38px;top:1326.00px;font-size:28.05px;color:#4a4a4a;transform:scaleX(1.0601);-webkit-text-stroke:1.5px #4a4a4a;">Reporting</div>
<div class="t" style="left:185.52px;top:1446.00px;font-size:28.05px;color:#4a4a4a;transform:scaleX(0.9906);-webkit-text-stroke:1.5px #4a4a4a;">Resources</div>
<div class="t" style="left:185.48px;top:1566.00px;font-size:28.05px;color:#4a4a4a;transform:scaleX(1.0117);-webkit-text-stroke:1.5px #4a4a4a;">Events</div>
<div class="t" style="left:686.50px;top:31.08px;font-size:24.71px;color:#787878;font-weight:bold;transform:scaleX(0.9269);">STAGE ENVIRONMENT</div>
<div class="t" style="left:661.55px;top:60.27px;font-size:67.59px;color:#000;font-weight:bold;transform:scaleX(0.8632);">Distribution</div>
<div class="t" style="left:716.00px;top:264.00px;font-size:28.34px;color:#3a3a3a;font-weight:bold;transform:scaleX(0.9385);">TO DISTRIBUTE</div>
<div class="t" style="left:1023.76px;top:264.00px;font-size:28.34px;color:#4a4a4a;font-weight:bold;transform:scaleX(0.9354);">IN PROCESS &amp; FINISHED</div>
<div class="t" style="left:1449.07px;top:264.00px;font-size:28.34px;color:#4a4a4a;font-weight:bold;transform:scaleX(0.9300);">BATCH BUILDING</div>
<div class="t" style="left:1778.07px;top:264.00px;font-size:28.34px;color:#4a4a4a;font-weight:bold;transform:scaleX(0.9280);">MASTER ORDERS</div>
<div class="t" style="left:2291.92px;top:389.48px;font-size:28.49px;color:#333;transform:scaleX(1.0815);">Specify shift</div>
<div class="t" style="left:853.10px;top:524.78px;font-size:24.71px;color:#ffffff;transform:scaleX(0.9496);-webkit-text-stroke:0.45px #fff;">MASTER</div>
<div class="t" style="left:862.10px;top:560.88px;font-size:24.71px;color:#ffffff;transform:scaleX(0.9047);-webkit-text-stroke:0.45px #fff;">ORDER</div>
<div class="t" style="left:1018.01px;top:524.78px;font-size:24.71px;color:#ffffff;transform:scaleX(0.9927);-webkit-text-stroke:0.45px #fff;">ITEM</div>
<div class="t" style="left:995.06px;top:560.88px;font-size:24.71px;color:#ffffff;transform:scaleX(0.9697);-webkit-text-stroke:0.45px #fff;">NUMBER</div>
<div class="t" style="left:1137.05px;top:542.98px;font-size:24.71px;color:#ffffff;transform:scaleX(0.9731);-webkit-text-stroke:0.45px #fff;">MATERIAL</div>
<div class="t" style="left:1279.26px;top:524.78px;font-size:24.71px;color:#ffffff;transform:scaleX(0.9723);-webkit-text-stroke:0.45px #fff;">MATERIAL</div>
<div class="t" style="left:1309.00px;top:560.88px;font-size:24.71px;color:#ffffff;transform:scaleX(0.8989);-webkit-text-stroke:0.45px #fff;">TITLE</div>
<div class="t" style="left:1421.85px;top:542.88px;font-size:24.71px;color:#ffffff;transform:scaleX(0.9502);-webkit-text-stroke:0.45px #fff;">QUANTITY</div>
<div class="t" style="left:1563.86px;top:525.28px;font-size:24.71px;color:#ffffff;transform:scaleX(0.9409);-webkit-text-stroke:0.45px #fff;">OUTBOUND</div>
<div class="t" style="left:1574.14px;top:560.58px;font-size:24.71px;color:#ffffff;transform:scaleX(0.9295);-webkit-text-stroke:0.45px #fff;">DELIVERY</div>
<div class="t" style="left:1706.17px;top:506.88px;font-size:24.71px;color:#ffffff;transform:scaleX(0.9162);-webkit-text-stroke:0.45px #fff;">REQUIRED</div>
<div class="t" style="left:1729.06px;top:542.88px;font-size:24.71px;color:#ffffff;transform:scaleX(0.9386);-webkit-text-stroke:0.45px #fff;">START</div>
<div class="t" style="left:1738.80px;top:578.88px;font-size:24.71px;color:#ffffff;transform:scaleX(0.9435);-webkit-text-stroke:0.45px #fff;">TIME</div>
<div class="t" style="left:1848.16px;top:506.88px;font-size:24.71px;color:#ffffff;transform:scaleX(0.9178);-webkit-text-stroke:0.45px #fff;">REQUIRED</div>
<div class="t" style="left:1868.83px;top:542.88px;font-size:24.71px;color:#ffffff;transform:scaleX(0.9858);-webkit-text-stroke:0.45px #fff;">FINISH</div>
<div class="t" style="left:1880.80px;top:578.88px;font-size:24.71px;color:#ffffff;transform:scaleX(0.9435);-webkit-text-stroke:0.45px #fff;">TIME</div>
<div class="t" style="left:1991.07px;top:542.88px;font-size:24.71px;color:#ffffff;transform:scaleX(0.9322);-webkit-text-stroke:0.45px #fff;">STATUS</div>
<div class="t" style="left:2133.71px;top:543.08px;font-size:24.71px;color:#ffffff;transform:scaleX(0.8854);-webkit-text-stroke:0.45px #fff;">CREATED</div>
<div class="t" style="left:2275.15px;top:543.08px;font-size:24.71px;color:#ffffff;transform:scaleX(0.9227);-webkit-text-stroke:0.45px #fff;">NOTE</div>
<div class="t" style="left:996.50px;top:937.53px;font-size:21.22px;color:#383838;transform:scaleX(0.9482);">4162</div>
<div class="t" style="left:1138.09px;top:937.53px;font-size:21.22px;color:#383838;transform:scaleX(0.9102);">PFP_1539_054</div>
<div class="t" style="left:1280.00px;top:892.83px;font-size:21.22px;color:#383838;transform:scaleX(0.9970);">PFP -</div>
<div class="t" style="left:1281.00px;top:922.63px;font-size:21.22px;color:#383838;transform:scaleX(0.9502);">Swatch Veco</div>
<div class="t" style="left:1281.00px;top:952.43px;font-size:21.22px;color:#383838;transform:scaleX(1.0775);">3000</div>
<div class="t" style="left:1279.97px;top:982.23px;font-size:21.22px;color:#383838;transform:scaleX(1.0286);">bottom</div>
<div class="t" style="left:1426.00px;top:937.53px;font-size:21.22px;color:#383838;transform:scaleX(1.0040);">500 pcs</div>
<div class="t" style="left:1564.07px;top:937.53px;font-size:21.22px;color:#383838;transform:scaleX(0.9282);">P1701941573</div>
<div class="t" style="left:1848.04px;top:922.63px;font-size:21.22px;color:#383838;transform:scaleX(0.9580);">9. 12. 2023</div>
<div class="t" style="left:1849.00px;top:952.23px;font-size:21.22px;color:#383838;transform:scaleX(1.0899);">00:00</div>
<div class="t" style="left:2134.00px;top:922.63px;font-size:21.22px;color:#383838;transform:scaleX(0.9854);">5. 6. 2024</div>
<div class="t" style="left:2133.17px;top:952.23px;font-size:21.22px;color:#383838;transform:scaleX(0.8343);">13:41</div>
<div class="t" style="left:996.50px;top:1090.23px;font-size:21.22px;color:#383838;transform:scaleX(0.9482);">3701</div>
<div class="t" style="left:1138.08px;top:1090.23px;font-size:21.22px;color:#383838;transform:scaleX(0.9164);">PFP_1539_055</div>
<div class="t" style="left:1280.00px;top:1060.63px;font-size:21.22px;color:#383838;transform:scaleX(0.9970);">PFP -</div>
<div class="t" style="left:1281.00px;top:1090.43px;font-size:21.22px;color:#383838;transform:scaleX(0.9502);">Swatch Veco</div>
<div class="t" style="left:1281.00px;top:1120.23px;font-size:21.22px;color:#383838;transform:scaleX(1.0575);">3000 top</div>
<div class="t" style="left:1426.00px;top:1090.23px;font-size:21.22px;color:#383838;transform:scaleX(1.0040);">500 pcs</div>
<div class="t" style="left:1564.07px;top:1090.23px;font-size:21.22px;color:#383838;transform:scaleX(0.9282);">P1701941573</div>
<div class="t" style="left:1848.04px;top:1075.43px;font-size:21.22px;color:#383838;transform:scaleX(0.9580);">9. 12. 2023</div>
<div class="t" style="left:1849.00px;top:1105.03px;font-size:21.22px;color:#383838;transform:scaleX(1.0899);">00:00</div>
<div class="t" style="left:2133.04px;top:1075.43px;font-size:21.22px;color:#383838;transform:scaleX(0.9565);">16. 5. 2024</div>
<div class="t" style="left:2133.05px;top:1105.03px;font-size:21.22px;color:#383838;transform:scaleX(0.9455);">13:26</div>
<div class="t" style="left:996.50px;top:1223.03px;font-size:21.22px;color:#383838;transform:scaleX(1.0668);">3683</div>
<div class="t" style="left:1138.30px;top:1223.03px;font-size:21.22px;color:#383838;transform:scaleX(0.8605);">TEST TV</div>
<div class="t" style="left:1281.00px;top:1223.03px;font-size:21.22px;color:#383838;transform:scaleX(0.8583);">TEST TV</div>
<div class="t" style="left:1457.14px;top:1223.03px;font-size:21.22px;color:#383838;transform:scaleX(0.8553);">1 pcs</div>
<div class="t" style="left:1564.02px;top:1223.03px;font-size:21.22px;color:#383838;transform:scaleX(0.9804);">P1713955069</div>
<div class="t" style="left:1848.04px;top:1208.63px;font-size:21.22px;color:#383838;transform:scaleX(0.9584);">14. 5. 2024</div>
<div class="t" style="left:1849.00px;top:1238.23px;font-size:21.22px;color:#383838;transform:scaleX(1.0708);">08:52</div>
<div class="t" style="left:2133.04px;top:1208.63px;font-size:21.22px;color:#383838;transform:scaleX(0.9565);">14. 5. 2024</div>
<div class="t" style="left:2134.00px;top:1238.23px;font-size:21.22px;color:#383838;transform:scaleX(1.0708);">08:52</div>
<div class="t" style="left:996.50px;top:1351.03px;font-size:21.22px;color:#383838;transform:scaleX(1.0668);">3682</div>
<div class="t" style="left:1138.30px;top:1351.03px;font-size:21.22px;color:#383838;transform:scaleX(0.8605);">TEST TV</div>
<div class="t" style="left:1281.00px;top:1351.03px;font-size:21.22px;color:#383838;transform:scaleX(0.8583);">TEST TV</div>
<div class="t" style="left:1443.08px;top:1351.03px;font-size:21.22px;color:#383838;transform:scaleX(0.9194);">10 pcs</div>
<div class="t" style="left:1564.02px;top:1351.03px;font-size:21.22px;color:#383838;transform:scaleX(0.9804);">P1713955069</div>
<div class="t" style="left:1847.99px;top:1336.63px;font-size:21.22px;color:#383838;transform:scaleX(1.0077);">24. 4. 2024</div>
<div class="t" style="left:1849.00px;top:1366.23px;font-size:21.22px;color:#383838;transform:scaleX(1.0708);">02:00</div>
<div class="t" style="left:2133.04px;top:1336.63px;font-size:21.22px;color:#383838;transform:scaleX(0.9565);">14. 5. 2024</div>
<div class="t" style="left:2134.00px;top:1366.23px;font-size:21.22px;color:#383838;transform:scaleX(1.0708);">08:52</div>
<div class="t" style="left:996.50px;top:1478.53px;font-size:21.22px;color:#383838;transform:scaleX(0.9698);">3681</div>
<div class="t" style="left:1138.30px;top:1478.53px;font-size:21.22px;color:#383838;transform:scaleX(0.8605);">TEST TV</div>
<div class="t" style="left:1281.00px;top:1478.53px;font-size:21.22px;color:#383838;transform:scaleX(0.8583);">TEST TV</div>
<div class="t" style="left:1443.08px;top:1478.53px;font-size:21.22px;color:#383838;transform:scaleX(0.9194);">10 pcs</div>
<div class="t" style="left:1564.02px;top:1478.53px;font-size:21.22px;color:#383838;transform:scaleX(0.9804);">P1713955069</div>
<div class="t" style="left:1847.99px;top:1464.13px;font-size:21.22px;color:#383838;transform:scaleX(1.0077);">24. 4. 2024</div>
<div class="t" style="left:1849.00px;top:1493.73px;font-size:21.22px;color:#383838;transform:scaleX(1.0708);">02:00</div>
<div class="t" style="left:2133.04px;top:1464.13px;font-size:21.22px;color:#383838;transform:scaleX(0.9565);">14. 5. 2024</div>
<div class="t" style="left:2134.00px;top:1493.73px;font-size:21.22px;color:#383838;transform:scaleX(1.0708);">08:52</div>
<div class="t" style="left:995.41px;top:1606.03px;font-size:21.22px;color:#383838;transform:scaleX(1.0902);">2993</div>
<div class="t" style="left:1138.30px;top:1606.03px;font-size:21.22px;color:#383838;transform:scaleX(0.8605);">TEST TV</div>
<div class="t" style="left:1281.00px;top:1606.03px;font-size:21.22px;color:#383838;transform:scaleX(0.8583);">TEST TV</div>
<div class="t" style="left:1443.08px;top:1606.03px;font-size:21.22px;color:#383838;transform:scaleX(0.9194);">10 pcs</div>
<div class="t" style="left:1564.04px;top:1606.03px;font-size:21.22px;color:#383838;transform:scaleX(0.9589);">P1713954027</div>
<div class="t" style="left:2132.99px;top:1591.63px;font-size:21.22px;color:#383838;transform:scaleX(1.0077);">24. 4. 2024</div>
<div class="t" style="left:2133.06px;top:1621.23px;font-size:21.22px;color:#383838;transform:scaleX(0.9357);">12:22</div>
<div class="t" style="left:2011.07px;top:935.28px;font-size:24.71px;color:#ffffff;font-weight:bold;transform:scaleX(0.9349);">Created</div>
<div class="t" style="left:2011.07px;top:1088.28px;font-size:24.71px;color:#ffffff;font-weight:bold;transform:scaleX(0.9349);">Created</div>
<div class="t" style="left:2011.07px;top:1221.28px;font-size:24.71px;color:#ffffff;font-weight:bold;transform:scaleX(0.9349);">Created</div>
<div class="t" style="left:2011.07px;top:1349.28px;font-size:24.71px;color:#ffffff;font-weight:bold;transform:scaleX(0.9349);">Created</div>
<div class="t" style="left:2011.07px;top:1477.28px;font-size:24.71px;color:#ffffff;font-weight:bold;transform:scaleX(0.9349);">Created</div>
<div class="t" style="left:2011.07px;top:1605.28px;font-size:24.71px;color:#ffffff;font-weight:bold;transform:scaleX(0.9349);">Created</div>
<div class="t" style="left:2462.76px;top:512.46px;font-size:32.99px;color:#ffffff;font-weight:bold;transform:scaleX(0.9182);">PL1 | Produc...</div>
<div class="t" style="left:2462.67px;top:808.96px;font-size:32.99px;color:#ffffff;font-weight:bold;transform:scaleX(0.9658);">PL2 | Produ...</div>
<div class="t" style="left:2462.84px;top:1080.06px;font-size:32.99px;color:#ffffff;font-weight:bold;transform:scaleX(0.9285);">PFP 1.1 | PFP...</div>
<div class="t" style="left:2462.78px;top:1352.16px;font-size:32.99px;color:#ffffff;font-weight:bold;transform:scaleX(0.9590);">PFP 1.2 | PF...</div>
<div class="t" style="left:2462.78px;top:1624.56px;font-size:32.99px;color:#ffffff;font-weight:bold;transform:scaleX(0.9590);">PFP 1.3 | PF...</div>
<div class="t" style="left:2462.59px;top:584.63px;font-size:25.00px;color:#f25a5a;transform:scaleX(1.0043);">Delayed</div>
<div class="t" style="left:2554.50px;top:590.05px;font-size:18.60px;color:#555;">:</div>
<div class="t" style="left:2578.00px;top:584.63px;font-size:25.00px;color:#3a3a3a;font-weight:bold;transform:scaleX(0.8974);">31 days 21</div>
<div class="t" style="left:2463.63px;top:608.93px;font-size:25.00px;color:#3a3a3a;font-weight:bold;transform:scaleX(0.9742);">hr. 50 min. 22 sec.</div>
<div class="t" style="left:2463.62px;top:689.08px;font-size:24.71px;color:#333;transform:scaleX(0.9767);">Queue:</div>
<div class="t" style="left:2546.61px;top:689.08px;font-size:24.71px;color:#3a3a3a;font-weight:bold;transform:scaleX(0.9872);">12 hr. 56 min.</div>
<div class="t" style="left:2464.60px;top:713.78px;font-size:24.71px;color:#3a3a3a;font-weight:bold;transform:scaleX(0.9692);">26 sec.</div>
<div class="t" style="left:2462.59px;top:880.93px;font-size:25.00px;color:#f25a5a;transform:scaleX(1.0043);">Delayed</div>
<div class="t" style="left:2554.50px;top:886.35px;font-size:18.60px;color:#555;">:</div>
<div class="t" style="left:2578.00px;top:880.93px;font-size:25.00px;color:#3a3a3a;font-weight:bold;transform:scaleX(0.9796);">472 days</div>
<div class="t" style="left:2463.65px;top:905.13px;font-size:25.00px;color:#3a3a3a;font-weight:bold;transform:scaleX(0.9545);">12 hr. 23 min. 47 sec.</div>
<div class="t" style="left:2463.62px;top:984.68px;font-size:24.71px;color:#333;transform:scaleX(0.9767);">Queue:</div>
<div class="t" style="left:2546.65px;top:984.68px;font-size:24.71px;color:#3a3a3a;font-weight:bold;transform:scaleX(0.9542);">16 min.</div>
<div class="t" style="left:2464.70px;top:1153.42px;font-size:25.73px;color:#333;transform:scaleX(0.9848);">Waiting for setup</div>
<div class="t" style="left:2463.76px;top:1176.92px;font-size:25.73px;color:#333;transform:scaleX(0.9400);">queue</div>
<div class="t" style="left:2464.70px;top:1425.42px;font-size:25.73px;color:#333;transform:scaleX(0.9848);">Waiting for setup</div>
<div class="t" style="left:2463.76px;top:1448.92px;font-size:25.73px;color:#333;transform:scaleX(0.9400);">queue</div>
<div class="t" style="left:2463.72px;top:1257.48px;font-size:24.71px;color:#333;transform:scaleX(0.9767);">Queue:</div>
<div class="t" style="left:2547.60px;top:1257.48px;font-size:24.71px;color:#3a3a3a;font-weight:bold;transform:scaleX(0.9546);">0 sec.</div>
<div class="t" style="left:2463.72px;top:1529.48px;font-size:24.71px;color:#333;transform:scaleX(0.9767);">Queue:</div>
<div class="t" style="left:2547.60px;top:1529.48px;font-size:24.71px;color:#3a3a3a;font-weight:bold;transform:scaleX(0.9546);">0 sec.</div>
<div class="a" style="left:2862px;top:0;width:10px;height:1640px;background:#e3e3e3"></div>
<div class="a" style="left:2862px;top:0;width:10px;height:442px;background:#a3a3a3;border-radius:8px 0 8px 8px"></div>
<div class="a" style="left:598px;top:0;width:2274px;height:1.5px;background:rgba(0,0,0,.19)"></div>
<div class="a" style="left:0;top:0;width:598px;height:1.5px;background:rgba(0,0,0,.5)"></div>
</body></html>
